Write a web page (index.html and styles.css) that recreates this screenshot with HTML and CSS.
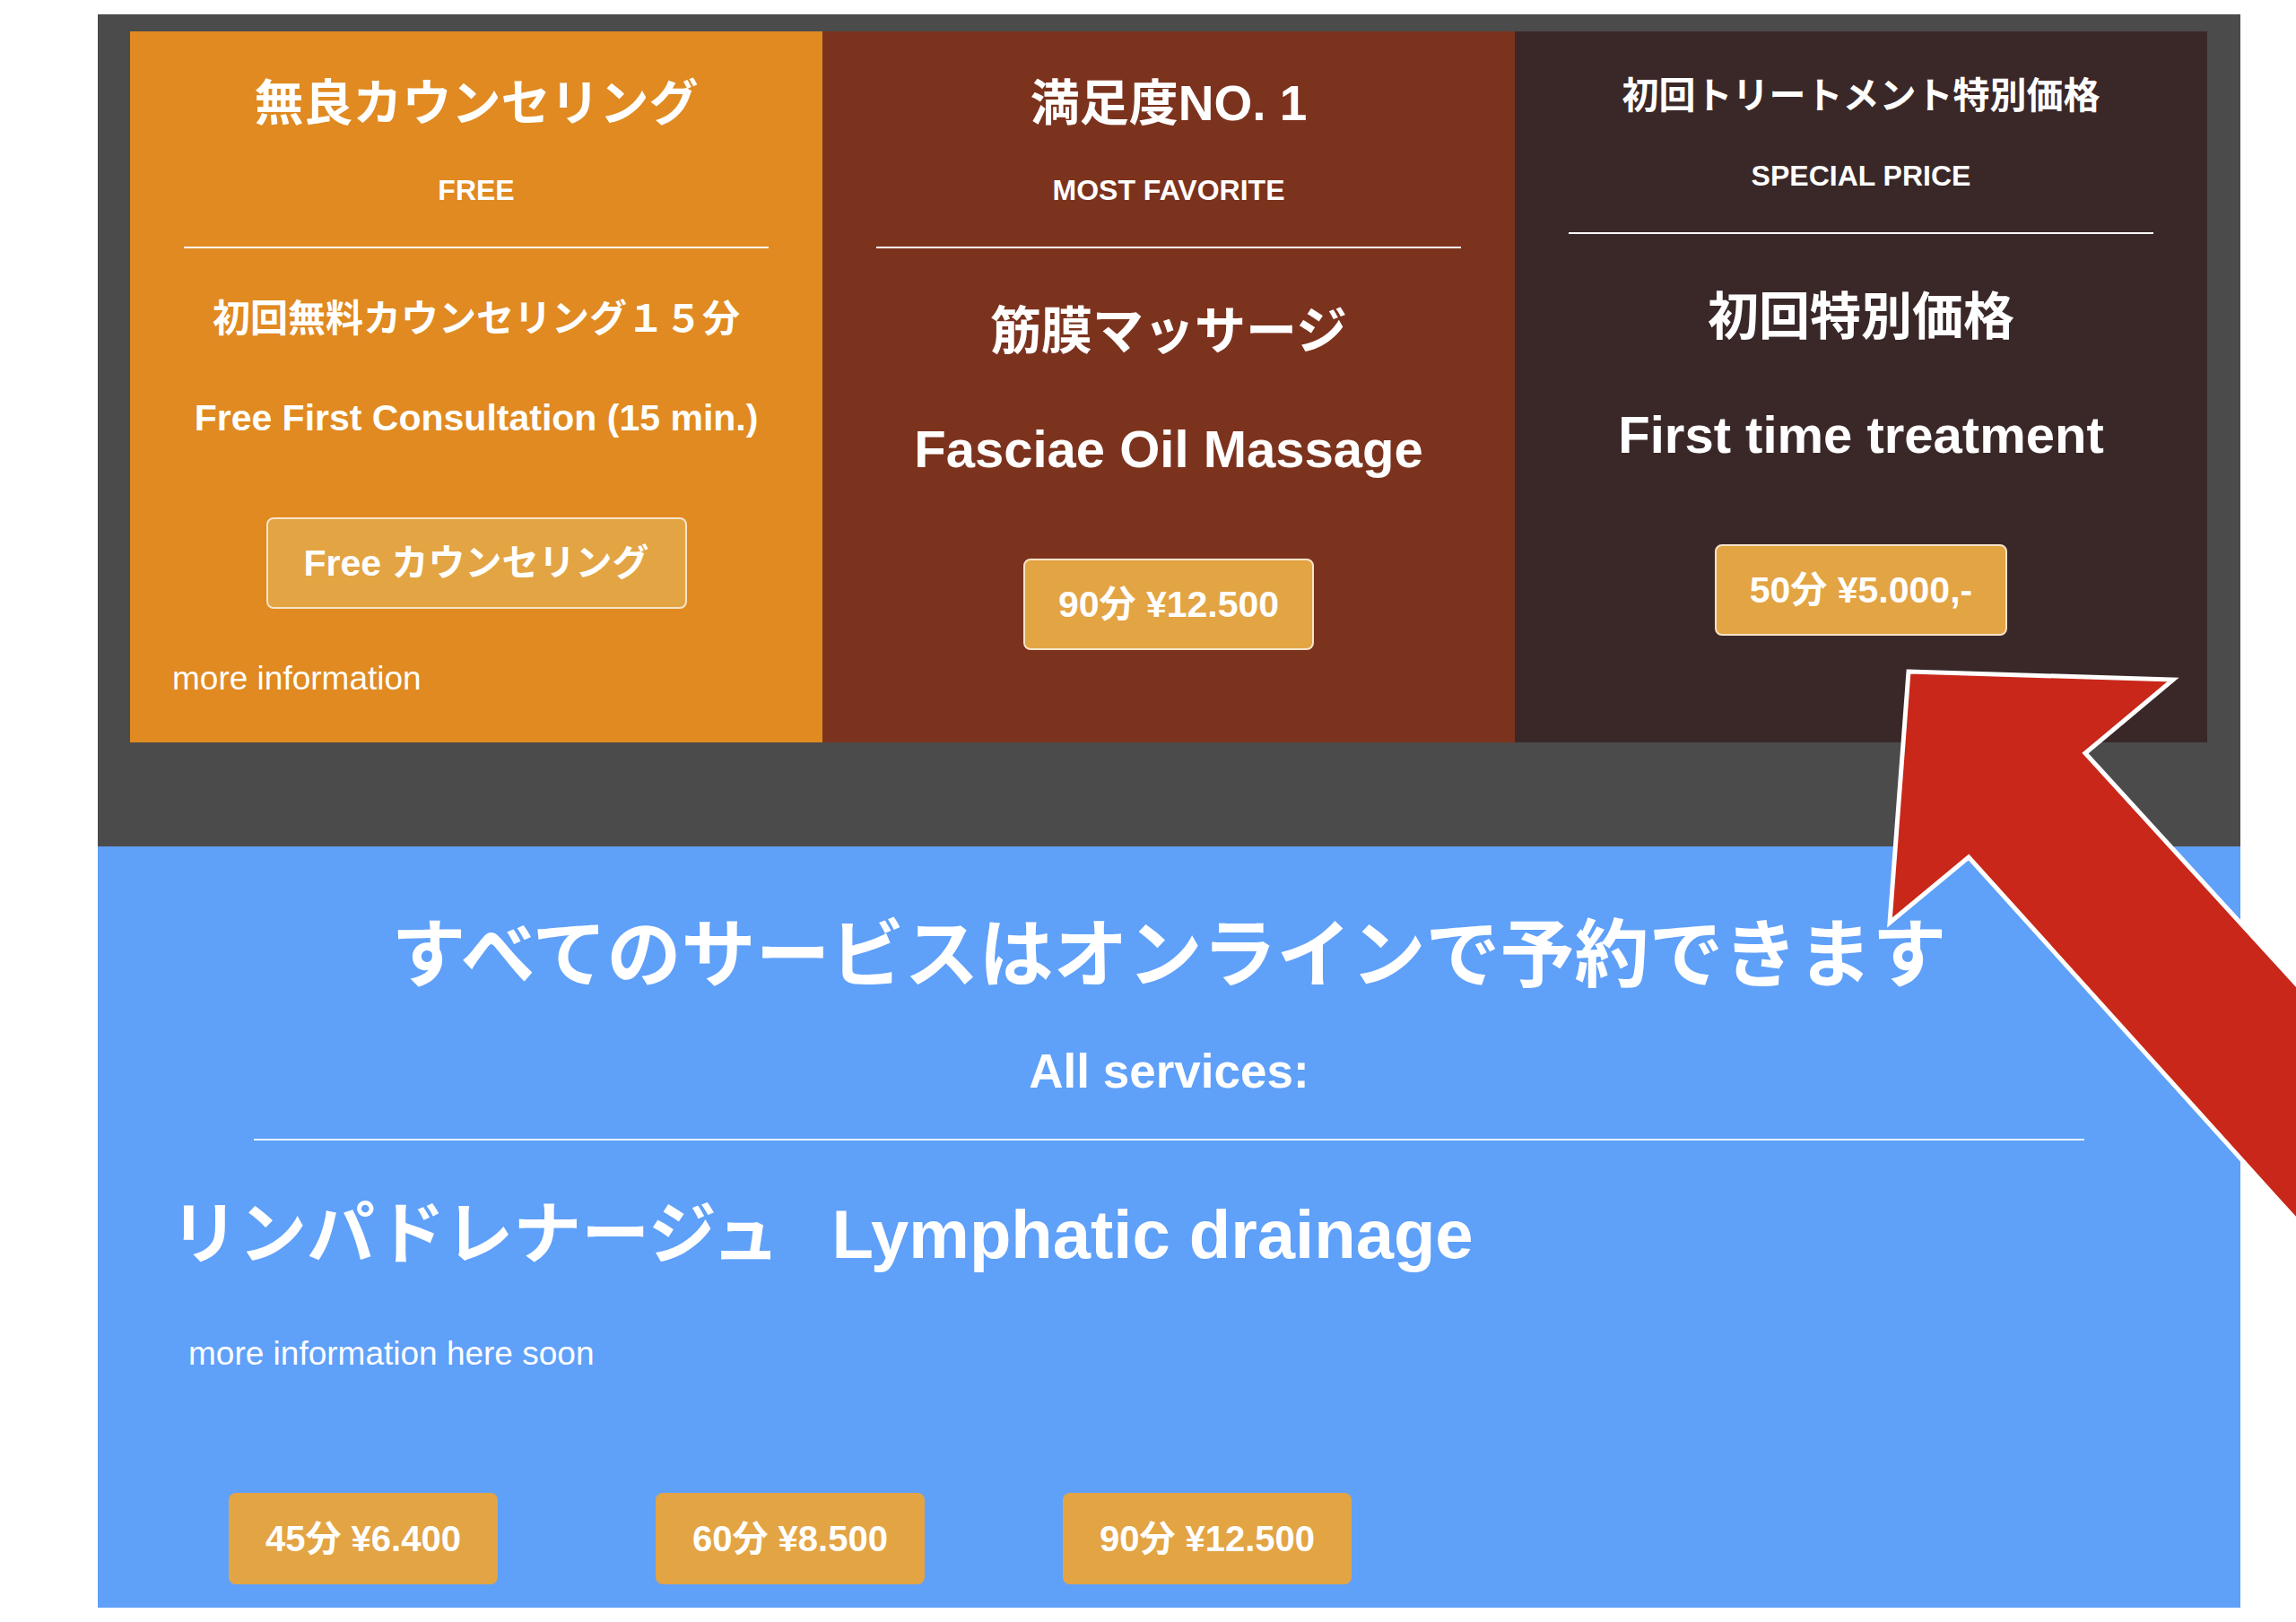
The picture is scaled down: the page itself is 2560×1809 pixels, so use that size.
FILE: index.html
```html
<!DOCTYPE html>
<html lang="ja">
<head>
    <meta charset="UTF-8">
    <meta name="viewport" content="width=device-width, initial-scale=1.0">
    <title>Menu &amp; Prices</title>
    <link rel="stylesheet" href="styles.css">
</head>
<body>
    <div class="page">
        <section class="featured">
            <div class="card card-free">
                <h3 class="card-title">無良カウンセリング</h3>
                <p class="card-tag">FREE</p>
                <hr class="card-rule">
                <h2 class="service-jp">初回無料カウンセリング１５分</h2>
                <h2 class="service-en">Free First Consultation (15 min.)</h2>
                <a class="price-btn" href="#">Free カウンセリング</a>
                <p class="more-link">more information</p>
            </div>

            <div class="card card-favorite">
                <h3 class="card-title">満足度NO. 1</h3>
                <p class="card-tag">MOST FAVORITE</p>
                <hr class="card-rule">
                <h2 class="service-jp">筋膜マッサージ</h2>
                <h2 class="service-en">Fasciae Oil Massage</h2>
                <a class="price-btn" href="#">90分 ¥12.500</a>
            </div>

            <div class="card card-special">
                <h3 class="card-title">初回トリートメント特別価格</h3>
                <p class="card-tag">SPECIAL PRICE</p>
                <hr class="card-rule">
                <h2 class="service-jp">初回特別価格</h2>
                <h2 class="service-en">First time treatment</h2>
                <a class="price-btn" href="#">50分 ¥5.000,-</a>
            </div>
        </section>

        <section class="services">
            <h2 class="services-title">すべてのサービスはオンラインで予約できます</h2>
            <p class="services-sub">All services:</p>
            <hr class="services-rule">
            <h3 class="service-name"><span class="service-name-jp">リンパドレナージュ</span>Lymphatic drainage</h3>
            <p class="more-link">more information here soon</p>
            <div class="price-row">
                <a class="price-btn price-btn-flat" href="#">45分 ¥6.400</a>
                <a class="price-btn price-btn-flat" href="#">60分 ¥8.500</a>
                <a class="price-btn price-btn-flat" href="#">90分 ¥12.500</a>
            </div>
        </section>
    </div>

    <svg class="arrow" viewBox="0 0 480 700" width="480" height="700" aria-hidden="true">
        <polygon points="48,29 343,38 245,120 530,432 530,696 115,236 27,309"
                 fill="#c8271a" stroke="#ffffff" stroke-width="5" stroke-linejoin="miter"/>
    </svg>
</body>
</html>
```

FILE: styles.css
```css
* {
    margin: 0;
    padding: 0;
    box-sizing: border-box;
}

body {
    font-family: "Liberation Sans", "Noto Sans CJK JP", sans-serif;
    color: #fff;
    background-color: #fff;
    position: relative;
    overflow-x: hidden;
}

.page {
    width: 2389px;
    margin: 16px 0 0 109px;
}

/* top three offers */
.featured {
    display: grid;
    grid-template-columns: repeat(3, 1fr);
    background-color: #4b4b4b;
    padding: 19px 37px 116px 36px;
}

.card {
    padding: 47px 0 49px;
    text-align: center;
}

.card-free {
    background-color: #e08a21;
}

.card-favorite {
    background-color: #7c331e;
}

.card-special {
    background-color: #3a2828;
}

.card-title {
    font-size: 55px;
    line-height: 66px;
    font-weight: 700;
}

.card-special .card-title {
    font-size: 41px;
    line-height: 50px;
}

.card-tag {
    font-size: 32px;
    line-height: 40px;
    font-weight: 700;
    margin-top: 44px;
}

.card-rule {
    border: none;
    height: 2px;
    background-color: #fff;
    margin: 43px 60px 0;
}

.service-jp {
    font-size: 57px;
    line-height: 68px;
    font-weight: 700;
    margin-top: 58px;
}

.service-en {
    font-size: 58px;
    line-height: 68px;
    font-weight: 700;
    margin-top: 64px;
}

.card-free .service-jp {
    font-size: 42px;
    line-height: 50px;
    margin-top: 54px;
}

.card-free .service-en {
    font-size: 41px;
    line-height: 50px;
    margin-top: 60px;
}

.price-btn {
    display: inline-block;
    margin-top: 88px;
    padding: 24px 37px;
    font-size: 41px;
    line-height: 50px;
    font-weight: 700;
    color: #fff;
    text-decoration: none;
    background-color: #e3a444;
    border: 2px solid #f7e4c8;
    border-radius: 8px;
}

.card-free .price-btn {
    margin-top: 86px;
    padding: 24px 40px;
}

.more-link {
    font-size: 37px;
    line-height: 44px;
    text-align: left;
    padding-left: 47px;
    margin-top: 56px;
}

/* all services */
.services {
    background-color: #5fa0f9;
    padding: 72px 0 26px;
}

.services-title {
    font-size: 83px;
    line-height: 100px;
    font-weight: 700;
    text-align: center;
}

.services-sub {
    font-size: 53px;
    line-height: 64px;
    font-weight: 700;
    text-align: center;
    margin-top: 47px;
}

.services-rule {
    border: none;
    height: 2px;
    background-color: #e8f1ff;
    margin: 43px 174px 0;
}

.service-name {
    font-size: 76px;
    line-height: 90px;
    font-weight: 700;
    padding-left: 81px;
    margin-top: 60px;
}

.service-name-jp {
    margin-right: 58px;
}

.services .more-link {
    padding-left: 101px;
    margin-top: 66px;
}

.price-row {
    display: flex;
    padding-left: 146px;
    margin-top: 133px;
}

.price-btn-flat {
    margin-top: 0;
    padding: 26px 41px;
    font-size: 40px;
    border: none;
}

.price-btn-flat + .price-btn-flat {
    margin-left: 176px;
}

.price-btn-flat:last-child {
    margin-left: 154px;
}

/* annotation arrow drawn over the page */
.arrow {
    position: absolute;
    left: 2080px;
    top: 720px;
    overflow: hidden;
}
```
